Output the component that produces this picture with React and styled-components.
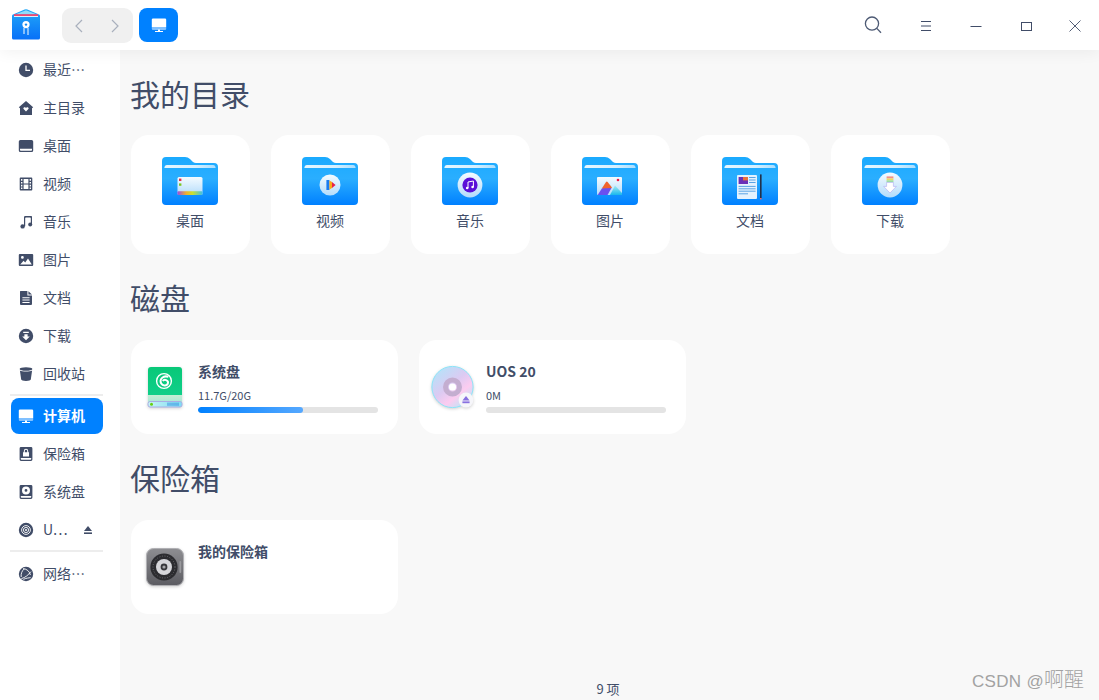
import React from "react";
import styled, { createGlobalStyle } from "styled-components";

const INK = "#414d68";
const BLUE = "#0081ff";

const GlobalStyle = createGlobalStyle`
  html, body {
    margin: 0;
    height: 100%;
    overflow: hidden;
    background: #f8f8f8;
    font-family: "Noto Sans CJK SC", "Noto Sans", sans-serif;
    color: ${INK};
  }
`;

/* ---------- sidebar glyphs, all on a 16 box ---------- */
const Glyph = ({ children, color = INK, size = 16 }) => (
  <svg width={size} height={size} viewBox="0 0 16 16" fill={color}>
    {children}
  </svg>
);

const GLYPHS = {
  clock: () => (
    <>
      <circle cx="8" cy="8" r="7.2" />
      <path d="M8 3.6V8.4H12" fill="none" stroke="#fff" strokeWidth="1.3" />
    </>
  ),
  home: () => (
    <>
      <path d="M8 1 15.2 7.2 14 8.2V15H2V8.2L.8 7.2Z" />
      <path d="M8 11.4 5.4 8.8C5 7.4 7 6.6 8 7.8 9 6.6 11 7.4 10.6 8.8Z" fill="#fff" />
    </>
  ),
  desktop: () => (
    <path fillRule="evenodd" d="M2.4 2H13.6A1.6 1.6 0 0 1 15.2 3.6V12.4A1.6 1.6 0 0 1 13.6 14H2.4A1.6 1.6 0 0 1 .8 12.4V3.6A1.6 1.6 0 0 1 2.4 2ZM2 10.8V12A.8.8 0 0 0 2.8 12.8H13.2A.8.8 0 0 0 14 12V10.8Z" />
  ),
  video: () => (
    <path fillRule="evenodd" d="M2.6 1.6H13.4A.9.9 0 0 1 14.3 2.5V13.5A.9.9 0 0 1 13.4 14.4H2.6A.9.9 0 0 1 1.7 13.5V2.5A.9.9 0 0 1 2.6 1.6ZM3 3V4.8H4.4V3ZM3 6V7.6H4.4V6ZM3 8.8V10.4H4.4V8.8ZM3 11.4V13H4.4V11.4ZM11.6 3V4.8H13V3ZM11.6 6V7.6H13V6ZM11.6 8.8V10.4H13V8.8ZM11.6 11.4V13H13V11.4ZM5.6 3V7.4H10.4V3ZM5.6 8.6V13H10.4V8.6Z" />
  ),
  music: () => (
    <>
      <path d="M6 12.2V3.2Q6 2 7.2 2H13.4Q14 2 14 3V10.4H12.8V4.4Q12.8 3.4 12 3.4H8Q7.2 3.4 7.2 4.2V12.2Z" />
      <circle cx="4.6" cy="12.4" r="2.2" />
      <circle cx="12.2" cy="10.6" r="2" />
    </>
  ),
  image: () => (
    <path fillRule="evenodd" d="M1.8 2H14.2A1 1 0 0 1 15.2 3V13A1 1 0 0 1 14.2 14H1.8A1 1 0 0 1 .8 13V3A1 1 0 0 1 1.8 2ZM4.4 4A1.4 1.4 0 1 0 4.4 6.8 1.4 1.4 0 0 0 4.4 4ZM2.2 12.4H13.8L10 6.6 7.2 10.4 5.6 8.8Z" />
  ),
  doc: () => (
    <path fillRule="evenodd" d="M2.4 1H9.4V5.4H14V14A1 1 0 0 1 13 15H3A1 1 0 0 1 2 14V1.4ZM10.4 1.2 14 4.4H10.4ZM4.4 7.2V8.2H11.6V7.2ZM4.4 9.6V10.6H11.6V9.6ZM4.4 12V13H11.6V12Z" />
  ),
  download: () => (
    <path fillRule="evenodd" d="M8 .8A7.2 7.2 0 1 1 8 15.2 7.2 7.2 0 0 1 8 .8ZM5.2 3.8V5H10.8V3.8ZM6.4 6.2V8.4H4.2L8 12.2 11.8 8.4H9.6V6.2Z" />
  ),
  trash: () => (
    <>
      <ellipse cx="8" cy="3" rx="6.4" ry="1.8" />
      <path d="M1.9 4.4C4 5.8 12 5.8 14.1 4.4L12.8 13.6Q12.4 15 8 15 3.6 15 3.2 13.6Z" />
    </>
  ),
  computer: () => (
    <>
      <path d="M2 1.6H14A1.2 1.2 0 0 1 15.2 2.8V10.4H.8V2.8A1.2 1.2 0 0 1 2 1.6Z" />
      <path d="M.8 11.4H15.2V11.8A.8.8 0 0 1 14.4 12.6H1.6A.8.8 0 0 1 .8 11.8Z" />
      <path d="M7 12.6H9V14H12V15H4V14H7Z" />
    </>
  ),
  vault: () => (
    <path fillRule="evenodd" d="M3 1H13A1.4 1.4 0 0 1 14.4 2.4V13.6A1.4 1.4 0 0 1 13 15H3A1.4 1.4 0 0 1 1.6 13.6V2.4A1.4 1.4 0 0 1 3 1ZM8 2.8A2.2 2.2 0 0 0 5.8 5V6.2H5V10.6H11V6.2H10.2V5A2.2 2.2 0 0 0 8 2.8ZM8 3.8A1.2 1.2 0 0 1 9.2 5V6.2H6.8V5A1.2 1.2 0 0 1 8 3.8ZM2.8 12V13A.8.8 0 0 0 3.6 13.8H12.4A.8.8 0 0 0 13.2 13V12Z" />
  ),
  disk: () => (
    <path fillRule="evenodd" d="M3 1H13A1.4 1.4 0 0 1 14.4 2.4V13.6A1.4 1.4 0 0 1 13 15H3A1.4 1.4 0 0 1 1.6 13.6V2.4A1.4 1.4 0 0 1 3 1ZM8 2.4A4 4 0 1 0 8 10.4 4 4 0 0 0 8 2.4ZM8 5A1.4 1.4 0 1 1 8 7.8 1.4 1.4 0 0 1 8 5ZM2.8 12V13A.8.8 0 0 0 3.6 13.8H12.4A.8.8 0 0 0 13.2 13V12Z" />
  ),
  disc: () => (
    <>
      <circle cx="8" cy="8" r="7.2" />
      <circle cx="8" cy="8" r="4.4" fill="none" stroke="#fff" strokeWidth=".9" />
      <circle cx="8" cy="8" r="2.6" fill="none" stroke="#fff" strokeWidth=".9" />
      <circle cx="8" cy="8" r="1" fill="#fff" />
    </>
  ),
  network: () => (
    <>
      <circle cx="8" cy="8" r="7.2" />
      <path d="M5 2.6C9 3 11.6 5.4 12.4 9M13 5.6C10.2 9 7.4 11.6 3.4 12.6M3.2 11C2.8 7.6 4 4.6 6.4 2.8M5.4 13.4C8 12 10.8 12 12.6 11.6" fill="none" stroke="#fff" strokeWidth=".9" />
    </>
  ),
};

const NAV_TOP = [
  ["clock", "最近…"],
  ["home", "主目录"],
  ["desktop", "桌面"],
  ["video", "视频"],
  ["music", "音乐"],
  ["image", "图片"],
  ["doc", "文档"],
  ["download", "下载"],
  ["trash", "回收站"],
];

/* ---------- folder icons ---------- */
const FolderBase = ({ children }) => (
  <svg width="56" height="48" viewBox="0 0 56 48">
    <defs>
      <linearGradient id="folderFill" x1="0" y1="0" x2="0" y2="1">
        <stop offset="0" stopColor="#1aaaff" />
        <stop offset="0.45" stopColor="#2aaeff" />
        <stop offset="1" stopColor="#0080ff" />
      </linearGradient>
      <linearGradient id="folderShine" x1="0" y1="0" x2="1" y2="0">
        <stop offset="0" stopColor="#e6f6ff" />
        <stop offset="0.6" stopColor="#d6f0ff" />
        <stop offset="1" stopColor="#a9deff" />
      </linearGradient>
      <linearGradient id="badgeFill" x1="0" y1="0" x2="0" y2="1">
        <stop offset="0" stopColor="#f4fbff" />
        <stop offset="1" stopColor="#b4dcfb" />
      </linearGradient>
      <linearGradient id="rainbow" x1="0" y1="0" x2="1" y2="0">
        <stop offset="0" stopColor="#9a4ee0" />
        <stop offset="0.35" stopColor="#f0b030" />
        <stop offset="0.6" stopColor="#c8e030" />
        <stop offset="1" stopColor="#40c0e8" />
      </linearGradient>
      <linearGradient id="peak" x1="0" y1="0" x2="0" y2="1">
        <stop offset="0" stopColor="#a8ecf4" />
        <stop offset="1" stopColor="#18b8ec" />
      </linearGradient>
    </defs>
    <path
      d="M4 0H23Q26 0 28 2L31 5Q32.4 6 34 6H52A4 4 0 0 1 56 10V44A4 4 0 0 1 52 48H4A4 4 0 0 1 0 44V4A4 4 0 0 1 4 0Z"
      fill="url(#folderFill)"
    />
    <path d="M5 8H51Q53.4 8 53.6 11H2.4Q2.6 8 5 8Z" fill="url(#folderShine)" />
    {children}
  </svg>
);

const FOLDERS = [
  {
    label: "桌面",
    emblem: (
      <>
        <rect x="15.5" y="20" width="25" height="18" rx="1.5" fill="url(#badgeFill)" />
        <rect x="17" y="21.6" width="2.4" height="2.4" fill="#e8304a" />
        <rect x="17" y="26.4" width="2.4" height="2.4" fill="#7cc520" />
        <rect x="15.5" y="34.2" width="25" height="3.8" rx="1" fill="url(#rainbow)" />
      </>
    ),
  },
  {
    label: "视频",
    emblem: (
      <>
        <circle cx="28" cy="28" r="10.5" fill="url(#badgeFill)" />
        <path d="M24.4 23H27.4V33H24.4Z" fill="#1a7cf0" />
        <path d="M27.4 23.4 30 25V31L27.4 32.6Z" fill="#f8a818" />
        <path d="M30 25 33.6 28 30 31Z" fill="#e8204a" />
      </>
    ),
  },
  {
    label: "音乐",
    emblem: (
      <>
        <circle cx="28" cy="28" r="12.4" fill="url(#badgeFill)" />
        <circle cx="28" cy="28" r="7.6" fill="#5a10d8" />
        <path d="M26 31V25L31.4 24V30" fill="none" stroke="#fff" strokeWidth="1" />
        <circle cx="25.2" cy="31" r="1.3" fill="#fff" />
        <circle cx="30.6" cy="30" r="1.3" fill="#fff" />
      </>
    ),
  },
  {
    label: "图片",
    emblem: (
      <>
        <rect x="15" y="20" width="25" height="18" rx="1" fill="url(#badgeFill)" />
        <circle cx="36" cy="23" r="1.3" fill="#f01848" />
        <path d="M28 38 33 28.4 40 36V38Z" fill="url(#peak)" />
        <path d="M19.8 31.6 24 25Q24.8 24 25.6 25L30 30.6 26.6 34Z" fill="#f0642c" />
        <path d="M15.7 38 19.8 31.6 29.4 31 25.6 38Z" fill="#6a50f0" />
      </>
    ),
  },
  {
    label: "文档",
    emblem: (
      <>
        <rect x="15" y="18" width="20" height="24" rx="1" fill="#e4f2fe" />
        <rect x="16.6" y="20" width="9.4" height="7" fill="#6a30b8" />
        <rect x="21" y="20" width="5" height="3.4" fill="#e8703c" />
        <path d="M27 20.5H33.6M27 23H33.6M27 25.5H33.6M16.6 29.4H33.6M16.6 31.8H33.6M16.6 34.2H33.6M16.6 36.8H26" stroke="#5aa4e4" strokeWidth="1" />
        <rect x="38" y="17.4" width="1.6" height="24" fill="#21304a" />
        <rect x="38" y="41" width="1.6" height="1.4" fill="#e86a70" />
      </>
    ),
  },
  {
    label: "下载",
    emblem: (
      <>
        <circle cx="28" cy="28" r="12.4" fill="url(#badgeFill)" />
        <rect x="24.6" y="19.4" width="6.8" height="2" fill="#f09088" />
        <rect x="24.6" y="21.4" width="6.8" height="2" fill="#f0d860" />
        <rect x="24.6" y="23.4" width="6.8" height="2" fill="#98e0a0" />
        <path d="M24.6 25.4H31.4V29.4H34.4L28 36 21.6 29.4H24.6Z" fill="#fff" stroke="#b8b4f4" strokeWidth=".7" />
      </>
    ),
  },
];

/* ---------- big device icons ---------- */
const SystemDiskIcon = () => (
  <svg width="36" height="42" viewBox="0 0 36 42">
    <defs>
      <linearGradient id="diskBody" x1="0" y1="0" x2="0" y2="1">
        <stop offset="0" stopColor="#08c878" />
        <stop offset="1" stopColor="#10cf8a" />
      </linearGradient>
      <linearGradient id="diskBase" x1="0" y1="0" x2="0" y2="1">
        <stop offset="0" stopColor="#c4eed4" />
        <stop offset="1" stopColor="#a8e8d8" />
      </linearGradient>
      <linearGradient id="diskSlot" x1="0" y1="0" x2="1" y2="0">
        <stop offset="0" stopColor="#c8f4f4" />
        <stop offset="1" stopColor="#7cdcf4" />
      </linearGradient>
    </defs>
    <path d="M4 1H32A3 3 0 0 1 35 4V30H1V4A3 3 0 0 1 4 1Z" fill="url(#diskBody)" />
    <path d="M1 29H35V37H1Z" fill="url(#diskBase)" />
    <rect x="1" y="35.5" width="34" height="5.5" rx="2" fill="url(#diskSlot)" stroke="#a8aee4" strokeWidth="1" />
    <circle cx="4.5" cy="38.2" r="1.5" fill="#68d010" />
    <path d="M21 36.6V39.8M23 36.6V39.8M25 36.6V39.8M27 36.6V39.8M29 36.6V39.8M31 36.6V39.8" stroke="#3a90e0" strokeWidth="1" />
    <circle cx="17" cy="15" r="7.4" fill="none" stroke="#fff" strokeWidth="1.4" />
    <path d="M21.4 10.8C16.4 9.2 12 13 14.2 17.6 15.8 20.4 20.4 20.2 21 16.8 21.4 14.4 17.4 12.6 15.8 15" fill="none" stroke="#fff" strokeWidth="2" />
  </svg>
);

const OpticalIcon = () => (
  <svg width="46" height="46" viewBox="0 0 46 46">
    <defs>
      <linearGradient id="cdFill" x1="0.1" y1="0" x2="0.9" y2="1">
        <stop offset="0" stopColor="#b0e6fa" />
        <stop offset="0.45" stopColor="#dccaf2" />
        <stop offset="0.68" stopColor="#fcccf0" />
        <stop offset="1" stopColor="#a8eef8" />
      </linearGradient>
    </defs>
    <circle cx="22.5" cy="23" r="20.6" fill="url(#cdFill)" stroke="#8ce4f8" strokeWidth="1" />
    <circle cx="22.5" cy="23" r="7" fill="none" stroke="#c4aed0" strokeWidth="5" />
    <circle cx="22.5" cy="23" r="3.6" fill="#fff" />
    <circle cx="36" cy="36" r="7.4" fill="#f6f6fa" />
    <path d="M36 32 39.6 36.4H32.4Z" fill="#8870e0" />
    <rect x="32.4" y="37.4" width="7.2" height="1.8" fill="#8870e0" />
  </svg>
);

const VaultIcon = () => (
  <svg width="38" height="38" viewBox="0 0 38 38">
    <defs>
      <linearGradient id="vaultFill" x1="0" y1="0" x2="0" y2="1">
        <stop offset="0" stopColor="#8e8e92" />
        <stop offset="1" stopColor="#5c5c62" />
      </linearGradient>
    </defs>
    <rect x=".5" y=".5" width="37" height="37" rx="7" fill="url(#vaultFill)" stroke="#b0b0b4" />
    <circle cx="18" cy="19" r="13.6" fill="#2c2c30" />
    <circle cx="18" cy="19" r="11" fill="none" stroke="#6a6a6e" strokeWidth="1" strokeDasharray="1 1.6" />
    <circle cx="18" cy="19" r="8" fill="#d6d6da" />
    <circle cx="18" cy="19" r="3.4" fill="#38383c" />
    <circle cx="18" cy="19" r="1.6" fill="#a8a8ac" />
    <rect x="33.4" y="13" width="1.8" height="12" rx=".9" fill="#9a9a9e" />
  </svg>
);

/* ---------- page ---------- */
const App = () => {
  return (
    <>
      <GlobalStyle />
      <Window>
        <TitleBar>
          <AppLogo>
            <svg width="28" height="31" viewBox="0 0 28 31">
              <defs>
                <linearGradient id="logoFill" x1="0" y1="0" x2="0" y2="1">
                  <stop offset="0" stopColor="#22a8f8" />
                  <stop offset="1" stopColor="#0870f8" />
                </linearGradient>
              </defs>
              <path d="M12.6.6Q14 0 15.4.6L27 5.6Q28 6 28 7.2V29A1.6 1.6 0 0 1 26.4 30.6H1.6A1.6 1.6 0 0 1 0 29V7.2Q0 6 1 5.6Z" fill="url(#logoFill)" />
              <path d="M3 5.6 14 1.2 25 5.6Z" fill="#8fdcf8" />
              <rect x="2" y="5.2" width="24" height="1.8" fill="#f04870" />
              <rect x="2" y="7" width="24" height="1" fill="#d8f0fc" />
              <circle cx="14" cy="15.6" r="3.6" fill="#fff" />
              <circle cx="14" cy="15.6" r="1.2" fill="#1488f0" />
              <path d="M12 19V25M16 19V26" stroke="#fff" strokeWidth="1" />
            </svg>
          </AppLogo>
          <NavButtons>
            <NavArrow>
              <svg width="10" height="16" viewBox="0 0 10 16" fill="none" stroke="#a9b0bd" strokeWidth="1.2">
                <path d="M7 2 1 8 7 14" />
              </svg>
            </NavArrow>
            <NavArrow>
              <svg width="10" height="16" viewBox="0 0 10 16" fill="none" stroke="#a9b0bd" strokeWidth="1.2">
                <path d="M2 2 8 8 2 14" />
              </svg>
            </NavArrow>
          </NavButtons>
          <CrumbButton>
            <Glyph color="#fff">{GLYPHS.computer()}</Glyph>
          </CrumbButton>
          <Spacer />
          <SearchButton>
            <svg width="20" height="20" viewBox="0 0 20 20" fill="none" stroke="#4d5a74" strokeWidth="1.3">
              <circle cx="9" cy="8.6" r="6.6" />
              <path d="M13.8 13.4 18 17.8" />
            </svg>
          </SearchButton>
          <WindowButton>
            <svg width="12" height="12" viewBox="0 0 12 12" fill="none" stroke={INK} strokeWidth="1">
              <path d="M1 1.5H11M1 6H11M1 10.5H11" />
            </svg>
          </WindowButton>
          <WindowButton>
            <svg width="12" height="12" viewBox="0 0 12 12" fill="none" stroke={INK} strokeWidth="1">
              <path d="M.5 6.5H11.5" />
            </svg>
          </WindowButton>
          <WindowButton>
            <svg width="12" height="12" viewBox="0 0 12 12" fill="none" stroke={INK} strokeWidth="1">
              <rect x="1.5" y="2.5" width="10" height="8" />
            </svg>
          </WindowButton>
          <WindowButton>
            <svg width="12" height="12" viewBox="0 0 12 12" fill="none" stroke={INK} strokeWidth=".9">
              <path d="M.5.5 11.5 11.5M11.5.5.5 11.5" />
            </svg>
          </WindowButton>
        </TitleBar>

        <Body>
          <Sidebar>
            {NAV_TOP.map(([icon, label]) => (
              <NavItem key={icon}>
                <NavIcon><Glyph>{GLYPHS[icon]()}</Glyph></NavIcon>
                <NavLabel>{label}</NavLabel>
              </NavItem>
            ))}
            <Divider />
            <NavItem $active>
              <NavIcon><Glyph color="#fff">{GLYPHS.computer()}</Glyph></NavIcon>
              <NavLabel>计算机</NavLabel>
            </NavItem>
            <NavItem>
              <NavIcon><Glyph>{GLYPHS.vault()}</Glyph></NavIcon>
              <NavLabel>保险箱</NavLabel>
            </NavItem>
            <NavItem>
              <NavIcon><Glyph>{GLYPHS.disk()}</Glyph></NavIcon>
              <NavLabel>系统盘</NavLabel>
            </NavItem>
            <NavItem>
              <NavIcon><Glyph>{GLYPHS.disc()}</Glyph></NavIcon>
              <NavLabel>U…</NavLabel>
              <EjectMark>
                <svg width="10" height="10" viewBox="0 0 10 10" fill={INK}>
                  <path d="M5 1 9 6H1Z" />
                  <rect x="1" y="7.4" width="8" height="1.6" />
                </svg>
              </EjectMark>
            </NavItem>
            <SecondDivider />
            <NavItem>
              <NavIcon><Glyph>{GLYPHS.network()}</Glyph></NavIcon>
              <NavLabel>网络…</NavLabel>
            </NavItem>
          </Sidebar>

          <Content>
            <Scroll>
              <FirstSectionTitle>我的目录</FirstSectionTitle>
              <FolderRow>
                {FOLDERS.map((folder) => (
                  <FolderCard key={folder.label}>
                    <FolderBase>{folder.emblem}</FolderBase>
                    <FolderName>{folder.label}</FolderName>
                  </FolderCard>
                ))}
              </FolderRow>

              <SectionTitle>磁盘</SectionTitle>
              <DeviceRow>
                <DeviceCard>
                  <DeviceIcon><SystemDiskIcon /></DeviceIcon>
                  <DeviceInfo>
                    <DeviceName>系统盘</DeviceName>
                    <DeviceUsage>11.7G/20G</DeviceUsage>
                    <Meter>
                      <MeterFill style={{ width: `${(11.7 / 20) * 100}%` }} />
                    </Meter>
                  </DeviceInfo>
                </DeviceCard>
                <DeviceCard>
                  <DeviceIcon><OpticalIcon /></DeviceIcon>
                  <DeviceInfo>
                    <DeviceName>UOS 20</DeviceName>
                    <DeviceUsage>0M</DeviceUsage>
                    <Meter />
                  </DeviceInfo>
                </DeviceCard>
              </DeviceRow>

              <SectionTitle>保险箱</SectionTitle>
              <DeviceRow>
                <DeviceCard>
                  <DeviceIcon><VaultIcon /></DeviceIcon>
                  <DeviceInfo>
                    <DeviceName>我的保险箱</DeviceName>
                  </DeviceInfo>
                </DeviceCard>
              </DeviceRow>
            </Scroll>
            <StatusBar>9 项</StatusBar>
          </Content>
        </Body>
        <Watermark>CSDN @<WatermarkName>啊醒</WatermarkName></Watermark>
      </Window>
    </>
  );
};

const Window = styled.div`
  position: relative;
  width: 1099px;
  height: 700px;
  display: flex;
  flex-direction: column;
  overflow: hidden;
`;

const TitleBar = styled.header`
  position: relative;
  z-index: 2;
  flex: none;
  height: 50px;
  display: flex;
  align-items: center;
  background: #fff;
  box-shadow: 0 2px 16px rgba(0, 0, 0, 0.06);
`;

const AppLogo = styled.div`
  display: flex;
  margin: 0 22px 1px 12px;
`;

const NavButtons = styled.div`
  width: 71px;
  height: 35px;
  margin-top: 1px;
  display: flex;
  background: #f0f0f0;
  border-radius: 9px;
`;

const NavArrow = styled.div`
  flex: 1;
  display: flex;
  align-items: center;
  justify-content: center;
`;

const CrumbButton = styled.div`
  width: 39px;
  height: 34px;
  margin-left: 6px;
  display: flex;
  align-items: center;
  justify-content: center;
  background: ${BLUE};
  border-radius: 8px;
`;

const Spacer = styled.div`
  flex: 1;
`;

const SearchButton = styled.div`
  width: 50px;
  height: 50px;
  margin-right: 3px;
  display: flex;
  align-items: center;
  justify-content: center;
`;

const WindowButton = styled.div`
  width: 50px;
  height: 50px;
  box-sizing: border-box;
  padding-top: 2px;
  display: flex;
  align-items: center;
  justify-content: center;

  &:last-child {
    width: 48px;
    padding-top: 1px;
  }
`;

const Body = styled.div`
  flex: 1;
  min-height: 0;
  display: flex;
`;

const Sidebar = styled.nav`
  flex: none;
  width: 120px;
  box-sizing: border-box;
  padding-top: 2px;
  display: flex;
  flex-direction: column;
  gap: 2px;
  background: #fff;
`;

const NavItem = styled.div`
  flex: none;
  width: 92px;
  height: 36px;
  margin-left: 11px;
  display: flex;
  align-items: center;
  gap: 9px;
  box-sizing: border-box;
  padding-left: 7px;
  border-radius: 8px;
  font-size: 14px;
  font-weight: ${(p) => (p.$active ? 700 : 400)};
  color: ${(p) => (p.$active ? "#fff" : INK)};
  background: ${(p) => (p.$active ? BLUE : "transparent")};
`;

const NavIcon = styled.span`
  display: flex;
  flex: none;
`;

const NavLabel = styled.span`
  padding-bottom: 2px;
`;

const EjectMark = styled.span`
  display: flex;
  margin-left: auto;
  margin-right: 10px;
`;

const Divider = styled.div`
  flex: none;
  width: 93px;
  height: 2px;
  margin-left: 10px;
  background: #ededed;
`;

const SecondDivider = styled(Divider)`
  margin-bottom: 2px;
`;

const Content = styled.main`
  flex: 1;
  min-width: 0;
  display: flex;
  flex-direction: column;
`;

const Scroll = styled.div`
  flex: 1;
  min-height: 0;
  box-sizing: border-box;
  padding: 22px 0 0 10px;
`;

const SectionTitle = styled.h2`
  margin: 22px 0 22px 0;
  font-size: 30px;
  font-weight: 400;
  line-height: 42px;
  color: ${INK};
`;

const FirstSectionTitle = styled(SectionTitle)`
  margin: 0 0 21px 0;
`;

const FolderRow = styled.div`
  display: flex;
  gap: 21px;
  margin-left: 1px;
`;

const FolderCard = styled.div`
  width: 119px;
  height: 119px;
  box-sizing: border-box;
  padding-top: 22px;
  display: flex;
  flex-direction: column;
  align-items: center;
  background: #fff;
  border-radius: 18px;

  svg {
    display: block;
    margin-left: -1px;
  }
`;

const FolderName = styled.div`
  margin-top: 5px;
  margin-left: -1px;
  font-size: 14px;
  line-height: 20px;
  color: ${INK};
`;

const DeviceRow = styled.div`
  display: flex;
  gap: 21px;
  margin-left: 1px;
`;

const DeviceCard = styled.div`
  width: 267px;
  height: 94px;
  display: flex;
  background: #fff;
  border-radius: 18px;
`;

const DeviceIcon = styled.div`
  flex: none;
  width: 67px;
  display: flex;
  align-items: center;
  justify-content: center;

  svg {
    filter: drop-shadow(0 1px 1.5px rgba(0, 0, 0, 0.18));
  }
`;

const DeviceInfo = styled.div`
  width: 180px;
  padding-top: 21px;
`;

const DeviceName = styled.div`
  font-size: 14px;
  font-weight: 700;
  line-height: 20px;
  color: ${INK};
`;

const DeviceUsage = styled.div`
  margin-top: 6px;
  font-size: 11px;
  line-height: 16px;
  color: ${INK};
`;

const Meter = styled.div`
  height: 6px;
  margin-top: 4px;
  background: #e4e4e4;
  border-radius: 3px;
  overflow: hidden;
`;

const MeterFill = styled.div`
  height: 100%;
  border-radius: 3px;
  background: linear-gradient(90deg, ${BLUE}, #55a8ff);
`;

const StatusBar = styled.div`
  flex: none;
  height: 22px;
  box-sizing: border-box;
  padding: 0 3px 1px 0;
  display: flex;
  align-items: center;
  justify-content: center;
  font-size: 13px;
  color: ${INK};
`;

const Watermark = styled.div`
  position: absolute;
  right: 15px;
  bottom: 4px;
  font-family: "Liberation Sans", "Noto Sans CJK SC", sans-serif;
  font-size: 17px;
  letter-spacing: 0.3px;
  line-height: 28px;
  color: #a2a2a2;
  white-space: nowrap;
`;

const WatermarkName = styled.span`
  font-family: "Noto Sans CJK SC", sans-serif;
  font-size: 20px;
  font-weight: 300;
  letter-spacing: 0;
`;

export default App;
